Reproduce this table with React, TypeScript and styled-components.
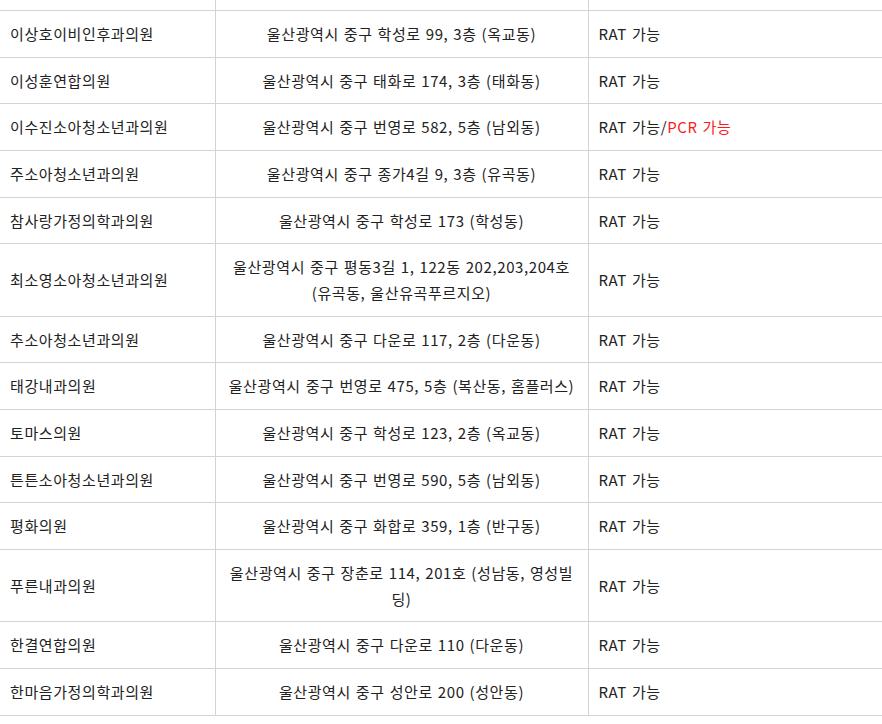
import React from "react";
import styled, {createGlobalStyle} from "styled-components";

type ClinicType = {
  name: string,
  address: string,
  pcr?: boolean,
}

const clinics: ClinicType[] = [
  {name: '이상호이비인후과의원', address: '울산광역시 중구 학성로 99, 3층 (옥교동)'},
  {name: '이성훈연합의원', address: '울산광역시 중구 태화로 174, 3층 (태화동)'},
  {name: '이수진소아청소년과의원', address: '울산광역시 중구 번영로 582, 5층 (남외동)', pcr: true},
  {name: '주소아청소년과의원', address: '울산광역시 중구 종가4길 9, 3층 (유곡동)'},
  {name: '참사랑가정의학과의원', address: '울산광역시 중구 학성로 173 (학성동)'},
  {name: '최소영소아청소년과의원', address: '울산광역시 중구 평동3길 1, 122동 202,203,204호 (유곡동, 울산유곡푸르지오)'},
  {name: '추소아청소년과의원', address: '울산광역시 중구 다운로 117, 2층 (다운동)'},
  {name: '태강내과의원', address: '울산광역시 중구 번영로 475, 5층 (복산동, 홈플러스)'},
  {name: '토마스의원', address: '울산광역시 중구 학성로 123, 2층 (옥교동)'},
  {name: '튼튼소아청소년과의원', address: '울산광역시 중구 번영로 590, 5층 (남외동)'},
  {name: '평화의원', address: '울산광역시 중구 화합로 359, 1층 (반구동)'},
  {name: '푸른내과의원', address: '울산광역시 중구 장춘로 114, 201호 (성남동, 영성빌딩)'},
  {name: '한결연합의원', address: '울산광역시 중구 다운로 110 (다운동)'},
  {name: '한마음가정의학과의원', address: '울산광역시 중구 성안로 200 (성안동)'},
]

export default function App() {
  return (
    <>
      <GlobalStyle/>
      <Viewport>
        <Table>
          <colgroup>
            <col style={{width: '215px'}}/>
            <col style={{width: '373px'}}/>
            <col/>
          </colgroup>
          <tbody>
            {/* previous row, scrolled almost out of view */}
            <tr>
              <Cell>&nbsp;</Cell>
              <Cell $center>&nbsp;</Cell>
              <Cell>&nbsp;</Cell>
            </tr>
            {clinics.map(c => (
              <tr key={c.name}>
                <Cell>{c.name}</Cell>
                <Cell $center>{c.address}</Cell>
                <Cell>
                  RAT 가능{c.pcr && <>/<Red>PCR 가능</Red></>}
                </Cell>
              </tr>
            ))}
          </tbody>
        </Table>
      </Viewport>
    </>
  )
}

const GlobalStyle = createGlobalStyle`
    body {
        margin: 0;
        background: #fff;
        font-family: "Noto Sans CJK KR", "Noto Sans", sans-serif;
        color: #222;
    }
`

const Viewport = styled.div`
    width: 882px;
    height: 724px;
    overflow: hidden;
`

const Table = styled.table`
    width: 900px;
    margin-top: -35.65px;
    border-collapse: collapse;
    table-layout: fixed;
    font-size: 15px;
    line-height: 25.65px;
    letter-spacing: 0.6px;
    word-spacing: 1px;
`

const Cell = styled.td<{ $center?: boolean }>`
    padding: 10px;
    border-bottom: 1px solid #d3d3d3;
    vertical-align: middle;
    text-align: ${props => props.$center ? 'center' : 'left'};
    word-break: break-all;

    & + & {
        border-left: 1px solid #d3d3d3;
    }
`

const Red = styled.span`
    color: #ff1a1a;
`
